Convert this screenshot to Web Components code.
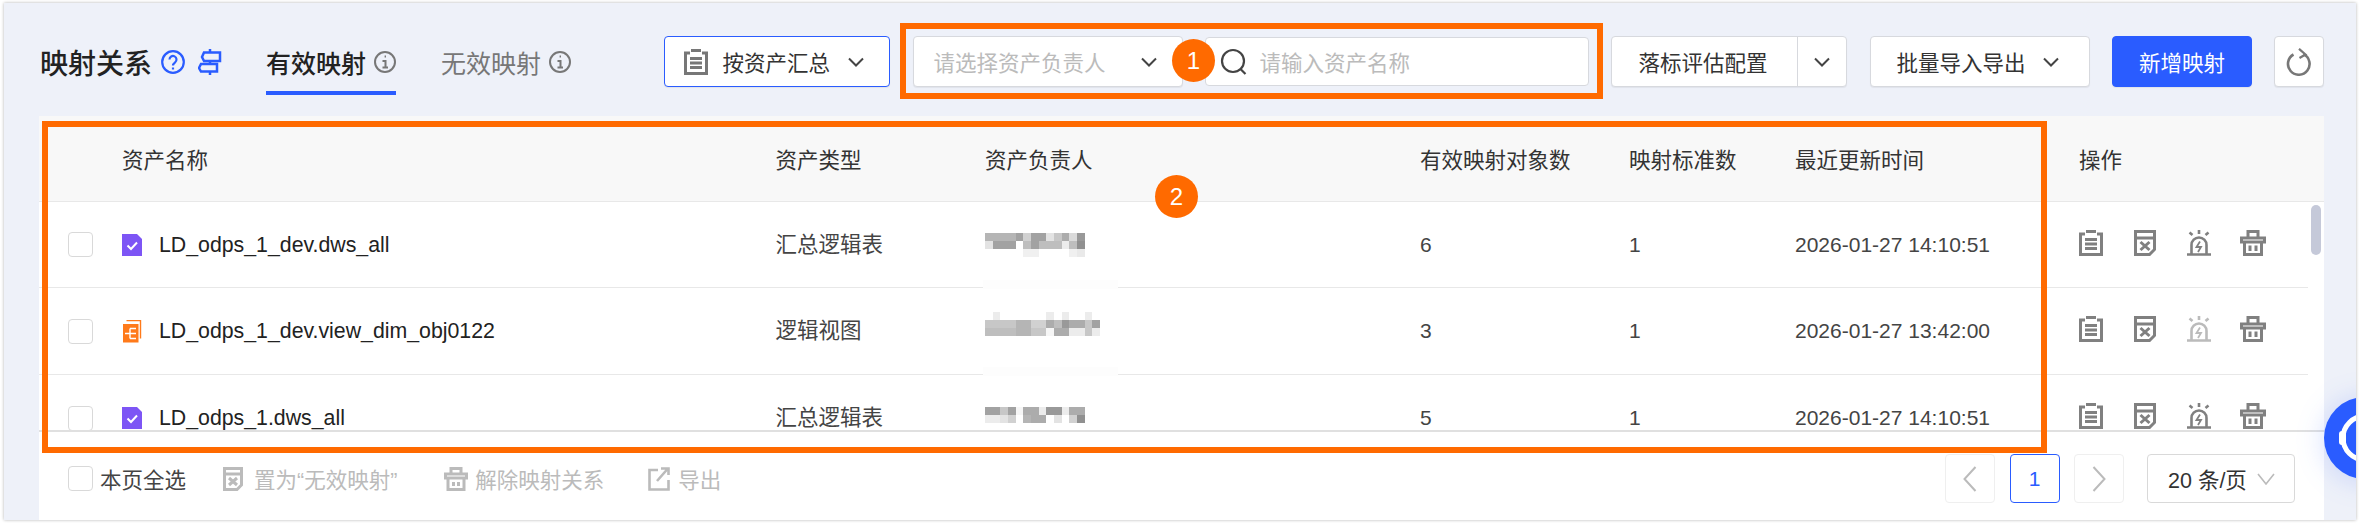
<!DOCTYPE html>
<html lang="zh-CN">
<head>
<meta charset="utf-8">
<title>映射关系</title>
<style>
  html, body { margin: 0; padding: 0; background: #fff; }
  body { width: 2360px; height: 524px; overflow: hidden; font-family: "Liberation Sans", "Noto Sans CJK SC", sans-serif; }
</style>
</head>
<body>
<mapping-page></mapping-page>

<script>
const ICONS = {
  doc: `<svg width="24" height="26" viewBox="0 0 24 26" fill="none" stroke="currentColor" stroke-width="3"><path d="M6 4H1.5V24.5H22.5V4H18M7 1.5H17M6 9.5H18M6 14H18M6 18.5H18"/></svg>`,
  xdoc: `<svg width="22" height="26" viewBox="0 0 22 26" fill="none" stroke="currentColor" stroke-width="3"><path d="M1.5 1.5H20.5V19.5L15.5 24.5H1.5ZM1.5 8H20.5M6.5 12L15.5 20M15.5 12L6.5 20"/></svg>`,
  alarm: `<svg width="24" height="26" viewBox="0 0 24 26" fill="none" stroke="currentColor" stroke-width="2.6"><path d="M0 24.5H24M4.5 24V15a7.5 7.5 0 0 1 15 0V24M12 0V4M2.5 2.5L5.5 5M21.5 2.5L18.5 5"/><path d="M13 11.5L9.5 17H14L11 22" stroke-width="1.8"/></svg>`,
  trash: `<svg width="26" height="26" viewBox="0 0 26 26" fill="none" stroke="currentColor" stroke-width="3"><path d="M8 8V1.5H18V8M1.5 8H24.5V12H1.5ZM4.5 12V24.5H21.5V12M10 15.5V21M16 15.5V21"/></svg>`,
  xdocSmall: `<svg width="20" height="24" viewBox="0 0 20 24" fill="none" stroke="currentColor" stroke-width="3"><path d="M1.5 1.5H18.5V18L14 22.5H1.5ZM1.5 7H18.5M6 11L14 18M14 11L6 18"/></svg>`,
  trashSmall: `<svg width="24" height="24" viewBox="0 0 24 24" fill="none" stroke="currentColor" stroke-width="3"><path d="M7 7V1.5H17V7M1.5 7H22.5V11H1.5ZM4 11V22.5H20V11M9.5 15V19M14.5 15V19"/></svg>`,
  export: `<svg width="22" height="24" viewBox="0 0 22 24" fill="none" stroke="currentColor" stroke-width="3"><path d="M10 3H1.5V22.5H20.5V13M9 14L19.5 2M13 1.5H20.5V8" stroke-width="2.6"/></svg>`,
  chevron: `<svg width="16" height="10" viewBox="0 0 16 10" fill="none" stroke="currentColor" stroke-width="2"><path d="M1 1.5L8 8.5L15 1.5"/></svg>`,
  info: `<svg width="22" height="22" viewBox="0 0 22 22" fill="none" stroke="currentColor" stroke-width="2"><circle cx="11" cy="11" r="10"/><path d="M8.5 10H11.5V16.5M8.5 16.5H14M10.6 5.5H12"/></svg>`,
  help: `<svg width="24" height="24" viewBox="0 0 24 24" fill="none" stroke="#2a5cff" stroke-width="2.2"><circle cx="12" cy="12" r="10.8"/><path d="M8.5 9.5a3.5 3.5 0 1 1 5.6 2.8C12.8 13.3 12 14 12 15.6M12 17.4V19.4"/></svg>`,
  sign: `<svg width="24" height="26" viewBox="0 0 24 26" fill="none" stroke="#2a5cff" stroke-width="2.5"><path d="M12 0V4M12 12V15M12 22V26M6 3.5H22V12H6L4 8ZM3 15H19V22.5H3L1 19Z"/></svg>`,
  asset: `<svg width="20" height="22" viewBox="0 0 20 22"><path d="M0 0H15L20 5V22H0Z" fill="#7d55f5"/><path d="M5.5 11.5L9 15L15 8.5" fill="none" stroke="#fff" stroke-width="2"/></svg>`,
  view: `<svg width="20" height="23" viewBox="0 0 20 23"><path d="M4.5 .5H18.5V18.5" fill="none" stroke="#ff7a1a" stroke-width="1.4"/><rect x="1" y="4" width="15.5" height="18.5" fill="#ff7a1a"/><path d="M3 13.5H8M8 8.5H14M8 13.5H14M8 18.5H14M8 8.5V18.5" fill="none" stroke="#fff" stroke-width="1.4"/></svg>`,
  search: `<svg width="28" height="28" viewBox="0 0 28 28" fill="none" stroke="#444" stroke-width="2.2"><circle cx="13" cy="13" r="11"/><path d="M20.5 21L25.5 26"/></svg>`,
  refresh: `<svg width="26" height="28" viewBox="0 0 26 28" fill="none" stroke="#777" stroke-width="2.6"><path d="M17.5 6.2A10.8 10.8 0 1 1 7.5 6.5"/><path d="M13 .8L19.5 6.5L13.5 10" stroke-width="2.2"/></svg>`,
  left: `<svg width="14" height="26" viewBox="0 0 14 26" fill="none" stroke="#bbb" stroke-width="2"><path d="M12.5 1L1.5 13L12.5 25"/></svg>`,
  right: `<svg width="14" height="26" viewBox="0 0 14 26" fill="none" stroke="#bbb" stroke-width="2"><path d="M1.5 1L12.5 13L1.5 25"/></svg>`,
  thinDown: `<svg width="18" height="12" viewBox="0 0 18 12" fill="none" stroke="#bbb" stroke-width="1.6"><path d="M1 1L9 11L17 1"/></svg>`
};

class XIcon extends HTMLElement {
  connectedCallback() {
    this.attachShadow({ mode: 'open' });
    this.shadowRoot.innerHTML = `
      <style>:host { display: inline-flex; flex: none; align-items: center; justify-content: center; } svg { display: block; }</style>
      ${ICONS[this.getAttribute('name')]}`;
  }
}

class XButton extends HTMLElement {
  connectedCallback() {
    this.attachShadow({ mode: 'open' });
    this.shadowRoot.innerHTML = `
      <style>
        :host {
          display: flex; flex: none; align-items: center; box-sizing: border-box;
          height: 51px; background: #fff; border: 1.5px solid #d7d9de; border-radius: 4px;
          font-size: 21.5px; color: #333; white-space: nowrap; box-shadow: 0 1px 1px rgba(0,0,0,.06);
        }
        :host([kind="outline"]) { border-color: #2a5cff; }
        :host([kind="primary"]) { background: #2a5cff; border-color: #2a5cff; color: #fff; justify-content: center; }
      </style>
      <slot></slot>`;
  }
}

class XCheck extends HTMLElement {
  connectedCallback() {
    this.attachShadow({ mode: 'open' });
    this.shadowRoot.innerHTML = `
      <style>:host { display: block; flex: none; box-sizing: border-box; width: 25px; height: 25px; background: #fff; border: 1.5px solid #d9d9d9; border-radius: 4px; }</style>`;
  }
}

class MappingToolbar extends HTMLElement {
  connectedCallback() {
    this.attachShadow({ mode: 'open' });
    this.shadowRoot.innerHTML = `
      <style>
        :host { display: flex; align-items: flex-start; box-sizing: border-box; height: 113px; padding: 33px 32px 0 36px; color: #222; }
        .title { display: flex; align-items: center; height: 51px; font-size: 28px; font-weight: 500; color: #222; width: 112px; white-space: nowrap; }
        .tool { display: flex; align-items: center; height: 51px; }
        .tab { display: flex; align-items: center; gap: 8px; height: 51px; font-size: 25px; position: relative; white-space: nowrap; }
        .tab.on { font-weight: 500; color: #222; margin-left: 44px; }
        .tab.on x-icon { color: #777; }
        .tab.on::after { content: ""; position: absolute; left: 0; right: 0; top: 55px; height: 4px; background: #2a5cff; }
        .tab.off { color: #777; margin-left: 45px; }
        .field { display: flex; align-items: center; box-sizing: border-box; width: 384px; height: 49px; margin: 1px 0 0 22px; padding-left: 13.5px; gap: 12px; background: #fff; border: 1.5px solid #d7d9de; border-radius: 4px; font-size: 21.5px; color: #bbb; }
      </style>
      <div class="title">映射关系</div>
      <div class="tool" style="margin-left:9px"><x-icon name="help"></x-icon></div>
      <div class="tool" style="margin-left:13px"><x-icon name="sign"></x-icon></div>
      <div class="tab on"><span>有效映射</span><x-icon name="info"></x-icon></div>
      <div class="tab off"><span>无效映射</span><x-icon name="info"></x-icon></div>
      <x-button kind="outline" style="width:226px;margin-left:93px;padding-left:18.5px">
        <x-icon name="doc" style="color:#777"></x-icon><span style="margin-left:15px">按资产汇总</span><x-icon name="chevron" style="margin-left:18px;color:#444"></x-icon>
      </x-button>
      <x-button style="width:270px;margin-left:23px;padding:0 25.5px 0 19.5px;justify-content:space-between;color:#bbb">
        <span>请选择资产负责人</span><x-icon name="chevron" style="color:#444"></x-icon>
      </x-button>
      <div class="field"><x-icon name="search"></x-icon><span>请输入资产名称</span></div>
      <x-button style="width:236px;margin-left:22px;padding-left:26.5px">
        <span>落标评估配置</span>
        <span style="display:flex;box-sizing:border-box;align-items:center;justify-content:center;width:49px;align-self:stretch;margin-left:auto;border-left:1.5px solid #d7d9de"><x-icon name="chevron" style="color:#444"></x-icon></span>
      </x-button>
      <x-button style="width:220px;margin-left:23px;padding-left:25.5px">
        <span>批量导入导出</span><x-icon name="chevron" style="margin-left:17px;color:#444"></x-icon>
      </x-button>
      <x-button kind="primary" style="width:140px;margin-left:22px">新增映射</x-button>
      <x-button style="width:50px;margin-left:22px;justify-content:center"><x-icon name="refresh"></x-icon></x-button>`;
  }
}

// columns are shared by the header and the rows
const COLS = '83px 653.5px 209.5px 435px 209px 166px 284px 229px';

class MappingRow extends HTMLElement {
  connectedCallback() {
    const a = (k) => this.getAttribute(k);
    const alarmColor = a('alarm-off') !== null ? '#bbb' : '#808080';
    this.attachShadow({ mode: 'open' });
    this.shadowRoot.innerHTML = `
      <style>
        :host {
          display: grid; grid-template-columns: ${COLS}; align-items: center; box-sizing: border-box;
          height: 87px; width: 2269px; border-bottom: 1.5px solid #e8e8e8; background: #fff;
          font-size: 21px; line-height: 24px; color: #444; flex: none;
        }
        :host([first]) { height: 86px; }
        .check { padding-left: 29px; display: flex; }
        .name { display: flex; align-items: center; color: #222; gap: 17px; font-size: 21.3px; }
        .cjk { font-size: 21.5px; }
        .owner { position: relative; align-self: stretch; }
        .patch { position: absolute; left: -2px; bottom: -2px; width: 135px; height: 9px; background: #fdfdfd; }
        .mosaic { position: relative; display: grid; grid-template-columns: repeat(15, 7.67px); grid-auto-rows: 8px; filter: blur(.7px); }
        .mosaic i { display: block; }
        .ops { display: flex; align-items: center; color: #808080; margin-bottom: 4px; }
      </style>
      <div class="check"><x-check></x-check></div>
      <div class="name"><x-icon name="${a('icon')}"></x-icon><span>${a('name')}</span></div>
      <div class="cjk">${a('type')}</div>
      <div class="owner"><div class="patch"></div><div class="mosaic" id="m"></div></div>
      <div>${a('count')}</div>
      <div>${a('standards')}</div>
      <div>${a('updated')}</div>
      <div class="ops">
        <x-icon name="doc"></x-icon>
        <x-icon name="xdoc" style="margin-left:31px"></x-icon>
        <x-icon name="alarm" style="margin-left:31px;color:${alarmColor}"></x-icon>
        <x-icon name="trash" style="margin-left:29px"></x-icon>
      </div>`;
    // blurred name: rows of cell opacities, one grey pixel block per value
    const m = this.shadowRoot.getElementById('m');
    m.style.marginTop = a('mosaic-top') + 'px';
    a('mosaic').split('|').forEach((row) => {
      const vals = row.split(',');
      for (let i = 0; i < 15; i++) {
        const cell = document.createElement('i');
        cell.style.background = `rgba(70,70,70,${vals[i] || 0})`;
        m.appendChild(cell);
      }
    });
  }
}

class MappingTable extends HTMLElement {
  connectedCallback() {
    this.attachShadow({ mode: 'open' });
    this.shadowRoot.innerHTML = `
      <style>
        :host { display: flex; flex-direction: column; position: relative; height: 314px; overflow: hidden; }
        .head {
          display: grid; grid-template-columns: ${COLS}; align-items: center; box-sizing: border-box; flex: none;
          height: 86px; padding-bottom: 1px; background: #f8f8f8; border-bottom: 1.5px solid #e8e8e8;
          font-size: 21.5px; color: #333;
        }
        .body { position: relative; height: 228px; overflow: hidden; display: flex; flex-direction: column; }
        .bar { position: absolute; left: 2272px; top: 3px; width: 10px; height: 50px; background: #c5c9d9; border-radius: 5px; }
      </style>
      <div class="head">
        <div></div><div>资产名称</div><div>资产类型</div><div>资产负责人</div><div>有效映射对象数</div><div>映射标准数</div><div>最近更新时间</div><div>操作</div>
      </div>
      <div class="body"><slot></slot><div class="bar"></div></div>`;
  }
}

class MappingFooter extends HTMLElement {
  connectedCallback() {
    this.attachShadow({ mode: 'open' });
    this.shadowRoot.innerHTML = `
      <style>
        :host {
          display: flex; align-items: flex-start; box-sizing: border-box; height: 90px; padding: 22px 29px 0;
          border-top: 2px solid #e0e0e0; font-size: 21.5px; color: #bbb; white-space: nowrap;
        }
        .act { display: flex; align-items: center; height: 49px; }
        .pages { display: flex; margin-left: auto; }
        .pg { display: flex; align-items: center; justify-content: center; box-sizing: border-box; width: 50px; height: 49px; border: 1.5px solid #efefef; border-radius: 4px; }
        .pg.on { border-color: #2a5cff; color: #2a5cff; font-size: 21px; }
        .size { display: flex; align-items: center; box-sizing: border-box; width: 148px; height: 49px; margin-left: 23px; padding-left: 20px; gap: 10px; border: 1.5px solid #d9d9d9; border-radius: 4px; color: #333; font-size: 21.5px; }
      </style>
      <div class="act" style="color:#444"><x-check></x-check><span style="margin-left:7px">本页全选</span></div>
      <div class="act" style="margin-left:37px"><x-icon name="xdocSmall"></x-icon><span style="margin-left:11px">置为“无效映射”</span></div>
      <div class="act" style="margin-left:47px"><x-icon name="trashSmall"></x-icon><span style="margin-left:7px">解除映射关系</span></div>
      <div class="act" style="margin-left:44px"><x-icon name="export"></x-icon><span style="margin-left:8px">导出</span></div>
      <div class="pages">
        <div class="pg"><x-icon name="left"></x-icon></div>
        <div class="pg on" style="margin-left:14.5px">1</div>
        <div class="pg" style="margin-left:14.5px"><x-icon name="right"></x-icon></div>
        <div class="size"><span>20 条/页</span><x-icon name="thinDown"></x-icon></div>
      </div>`;
  }
}

class MarkBox extends HTMLElement {
  connectedCallback() {
    this.attachShadow({ mode: 'open' });
    this.shadowRoot.innerHTML = `
      <style>
        :host { display: block; position: absolute; box-sizing: border-box; border: 6px solid #ff6a00; pointer-events: none; }
        .num {
          position: absolute; display: flex; align-items: center; justify-content: center;
          width: 43px; height: 43px; border-radius: 50%; background: #ff6a00; color: #fff;
          font-size: 24px;
        }
      </style>
      <div class="num" style="left:${this.getAttribute('num-x')}px;top:${this.getAttribute('num-y')}px">${this.getAttribute('num')}</div>`;
  }
}

class FloatHelper extends HTMLElement {
  connectedCallback() {
    this.attachShadow({ mode: 'open' });
    this.shadowRoot.innerHTML = `
      <style>
        :host { display: block; position: absolute; left: 2320px; top: 394px; width: 82px; height: 82px; }
        svg { display: block; overflow: visible; filter: drop-shadow(0 2px 14px rgba(42,92,255,.2)); }
      </style>
      <svg width="82" height="82" viewBox="0 0 82 82" fill="none"><circle cx="41" cy="41" r="41" fill="#2a5cff"/><circle cx="41" cy="41" r="22" stroke="#fff" stroke-width="5"/><rect x="15" y="34" width="7" height="14" rx="3" fill="#fff"/></svg>`;
  }
}

class MappingPage extends HTMLElement {
  connectedCallback() {
    this.attachShadow({ mode: 'open' });
    this.shadowRoot.innerHTML = `
      <style>
        :host {
          display: flex; flex-direction: column; position: relative; overflow: hidden; box-sizing: border-box;
          width: 2352px; height: 517px; margin: 3px 0 0 4px; background: #eef1f9;
          box-shadow: 0 0 3px rgba(0,0,0,.3); font-family: "Liberation Sans", "Noto Sans CJK SC", sans-serif;
        }
        .card { display: flex; flex-direction: column; flex: none; width: 2285px; height: 404px; margin-left: 35px; background: #fff; }
      </style>
      <mapping-toolbar></mapping-toolbar>
      <div class="card">
        <mapping-table>
          <mapping-row first icon="asset" name="LD_odps_1_dev.dws_all" type="汇总逻辑表" count="6" standards="1" updated="2026-01-27 14:10:51"
            mosaic-top="31"
            mosaic=".4,.4,.4,.4,.5,.25,.5,.5,.15,.3,.45,.2,.55|.15,.5,.5,.5,0,.35,.5,.35,.35,.35,.1,.35,.6|0,0,0,0,0,.08,.08,0,0,0,0,.08,.12"></mapping-row>
          <mapping-row icon="view" name="LD_odps_1_dev.view_dim_obj0122" type="逻辑视图" count="3" standards="1" updated="2026-01-27 13:42:00" alarm-off
            mosaic-top="24"
            mosaic="0,.1,0,0,0,0,0,0,.1,0,.1,0,0,.1,0|.3,.3,.3,.3,.4,.4,.25,.25,.45,.35,.55,.45,.45,.3,.5|.35,.35,.35,.35,.4,.4,.3,.3,.05,.45,.45,.1,.1,.3,.1"></mapping-row>
          <mapping-row icon="asset" name="LD_odps_1.dws_all" type="汇总逻辑表" count="5" standards="1" updated="2026-01-27 14:10:51"
            mosaic-top="32"
            mosaic=".5,.5,.3,.5,.05,.45,.45,.1,.55,.55,.1,.45,.45|.1,.1,.15,.25,0,.4,.45,.45,0,.15,0,.25,.6"></mapping-row>
        </mapping-table>
        <mapping-footer></mapping-footer>
      </div>
      <mark-box num="1" num-x="266" num-y="10" style="left:896px;top:20px;width:703px;height:76px"></mark-box>
      <mark-box num="2" num-x="1107" num-y="48" style="left:38px;top:118px;width:2005px;height:332px"></mark-box>
      <float-helper></float-helper>`;
  }
}

customElements.define('x-icon', XIcon);
customElements.define('x-button', XButton);
customElements.define('x-check', XCheck);
customElements.define('mapping-toolbar', MappingToolbar);
customElements.define('mapping-row', MappingRow);
customElements.define('mapping-table', MappingTable);
customElements.define('mapping-footer', MappingFooter);
customElements.define('mark-box', MarkBox);
customElements.define('float-helper', FloatHelper);
customElements.define('mapping-page', MappingPage);
</script>
</body>
</html>
